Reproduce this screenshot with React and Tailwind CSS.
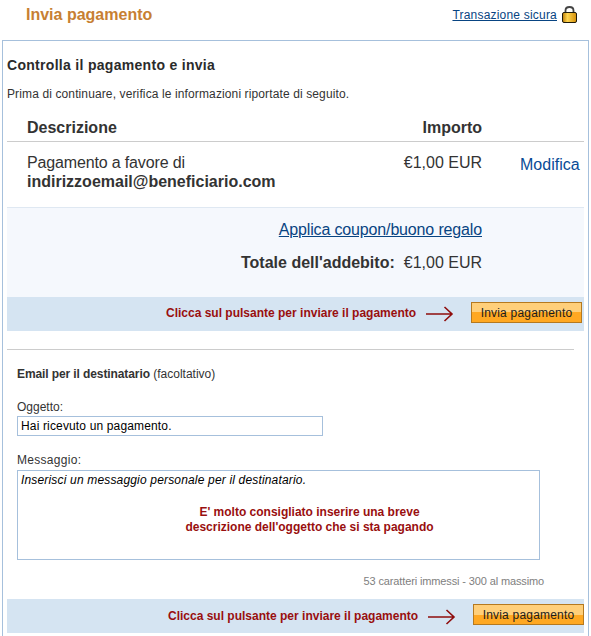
const SANS = { fontFamily: '"Liberation Sans", Arial, sans-serif' };

function Arrow() {
  return (
    <svg width="28" height="16" viewBox="0 0 28 16" className="mt-[2px] shrink-0">
      <path d="M0 8H26M18.500 1L26 8L18.500 15" fill="none" stroke="#8f0d0d" strokeWidth="1.600" />
    </svg>
  );
}

function Lock() {
  return (
    <svg width="15" height="17" viewBox="0 0 15 17" className="shrink-0">
      <defs>
        <linearGradient id="lockbody" x1="0" x2="1" y1="0" y2="0">
          <stop offset="0" stopColor="#b87a08" />
          <stop offset="0.35" stopColor="#ffd54f" />
          <stop offset="1" stopColor="#d48f0a" />
        </linearGradient>
      </defs>
      <path d="M3.500 7V4.500C3.500 2.300 5 1 7.500 1S11.500 2.300 11.500 4.500V7" fill="none" stroke="#444" strokeWidth="1.800" />
      <rect x="0.500" y="6.500" width="14" height="10" rx="1.500" fill="url(#lockbody)" stroke="#1f1a0a" />
    </svg>
  );
}

function SubmitBand({ className, labelClass }) {
  return (
    <div className={`flex h-[34px] items-center bg-[#d5e4f2] pb-[3px] ${className}`}>
      <div className={`flex items-center ${labelClass}`}>
        <span className="w-[250px] text-xs leading-none font-bold whitespace-nowrap text-[#990f0f]">Clicca sul pulsante per inviare il pagamento</span>
        <span className="ml-[10px] flex"><Arrow /></span>
      </div>
      <button className="ml-[17px] h-[21px] w-[111px] shrink-0 border border-[#b5791f] bg-[linear-gradient(#ffcf7a_0,#ffcf7a_50%,#ffa822_50%,#ffa822_100%)] text-xs leading-none tracking-[0.2px] text-[#1c1c1c]">
        Invia pagamento
      </button>
    </div>
  );
}

export default function App() {
  return (
    <div style={SANS} className="h-[636px] w-[591px] overflow-hidden bg-white text-[#333]">
      <header className="flex h-10 items-start justify-between pt-[6px] pr-[14px] pl-[26px]">
        <h1 className="text-base leading-[18px] font-bold text-[#c77f33]">Invia pagamento</h1>
        <div className="flex items-center gap-[5px]">
          <a className="text-xs tracking-[0.2px] text-[#084482] underline">Transazione sicura</a>
          <Lock />
        </div>
      </header>

      <main className="mr-[2px] ml-[2px] h-[596px] border-t border-r border-l border-[#a6c0dc] pt-[16px] pr-[4px] pl-[4px]">
        <h2 className="text-sm leading-4 font-bold tracking-[0.3px] text-[#2b2b2b]">Controlla il pagamento e invia</h2>
        <p className="mt-[14px] text-xs leading-[14px] tracking-[0.12px]">Prima di continuare, verifica le informazioni riportate di seguito.</p>

        <div className="mt-[17px] flex h-[24px] items-start border-b border-[#ccc] pr-[102px] pl-[20px] text-base leading-[20px] font-bold">
          <span className="flex-1">Descrizione</span>
          <span>Importo</span>
        </div>
        <div className="flex h-[65px] items-start pt-[11px] pl-[20px] text-base leading-[19px]">
          <div className="flex-1">
            <span className="tracking-[-0.15px]">Pagamento a favore di</span>
            <br />
            <b>indirizzoemail@beneficiario.com</b>
          </div>
          <span>€1,00 EUR</span>
          <a className="ml-[38px] w-[64px] pt-[2px] text-[#084b96]">Modifica</a>
        </div>

        <div className="h-[90px] border-t border-[#dfe8f2] bg-[#f5f8fd] pt-[12px] pr-[102px] text-right text-base leading-[20px]">
          <a className="tracking-[-0.15px] text-[#084482] underline">Applica coupon/buono regalo</a>
          <div className="mt-[13px]">
            <b>Totale dell'addebito:</b>
            <span className="ml-[9px]">€1,00 EUR</span>
          </div>
        </div>

        <SubmitBand className="pl-[159px]" labelClass="" />

        <hr className="mt-[18px] mr-[10px] border-[#ccc]" />

        <section className="pt-[17px] pl-[10px] text-xs leading-[14px]">
          <p><b className="tracking-[-0.1px]">Email per il destinatario</b> (facoltativo)</p>
          <label className="mt-[19px] block">Oggetto:</label>
          <div className="mt-[2px] flex h-5 w-[306px] items-center border border-[#a6c0dc] pl-[3px] tracking-[0.15px] text-black">Hai ricevuto un pagamento.</div>
          <label className="mt-[17px] block tracking-[0.3px]">Messaggio:</label>
          <div className="mt-[3px] h-[90px] w-[523px] border border-[#a6c0dc] pt-[2px] pl-[3px]">
            <p className="tracking-[0.17px] text-black italic">Inserisci un messaggio personale per il destinatario.</p>
            <p className="mt-[18px] pl-[59px] text-center leading-[15px] font-bold text-[#990f0f]">
              E' molto consigliato inserire una breve
              <br />
              descrizione dell'oggetto che si sta pagando
            </p>
          </div>
          <p className="mt-[14px] w-[527px] text-right text-[11px] tracking-[-0.13px] text-[#808080]">53 caratteri immessi - 300 al massimo</p>
        </section>

        <SubmitBand className="mt-[11px] pl-[161px]" labelClass="mt-[2px]" />
      </main>
    </div>
  );
}
